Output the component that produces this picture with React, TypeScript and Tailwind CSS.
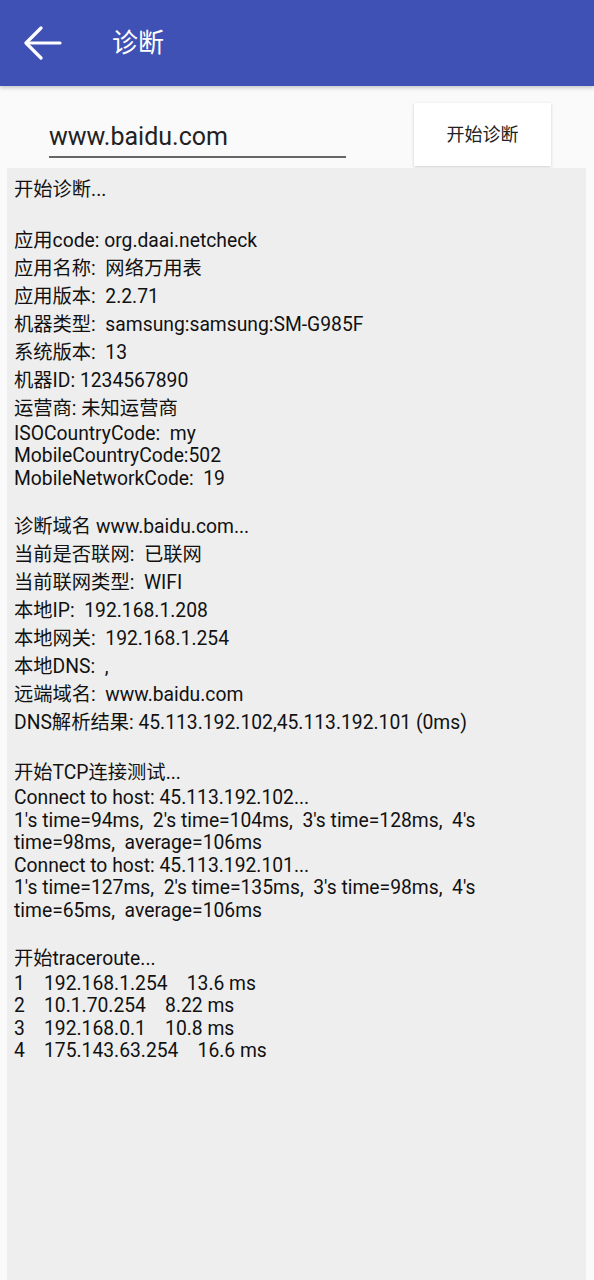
const LINES: string[] = [
  '开始诊断...',
  '',
  '应用code: org.daai.netcheck',
  '应用名称:  网络万用表',
  '应用版本:  2.2.71',
  '机器类型:  samsung:samsung:SM-G985F',
  '系统版本:  13',
  '机器ID: 1234567890',
  '运营商: 未知运营商',
  'ISOCountryCode:  my',
  'MobileCountryCode:502',
  'MobileNetworkCode:  19',
  '',
  '诊断域名 www.baidu.com...',
  '当前是否联网:  已联网',
  '当前联网类型:  WIFI',
  '本地IP:  192.168.1.208',
  '本地网关:  192.168.1.254',
  '本地DNS:  ,',
  '远端域名:  www.baidu.com',
  'DNS解析结果: 45.113.192.102,45.113.192.101 (0ms)',
  '',
  '开始TCP连接测试...',
  'Connect to host: 45.113.192.102...',
  "1's time=94ms,  2's time=104ms,  3's time=128ms,  4's",
  'time=98ms,  average=106ms',
  'Connect to host: 45.113.192.101...',
  "1's time=127ms,  2's time=135ms,  3's time=98ms,  4's",
  'time=65ms,  average=106ms',
  '',
  '开始traceroute...',
  '1    192.168.1.254    13.6 ms',
  '2    10.1.70.254    8.22 ms',
  '3    192.168.0.1    10.8 ms',
  '4    175.143.63.254    16.6 ms',
];

const hasCjk = (s: string) => /[\u3400-\u9fff\uff00-\uffef]/.test(s);

function BackArrow() {
  return (
    <svg width="38" height="34" viewBox="0 0 38 34" fill="none" stroke="white" strokeWidth="3.2" strokeLinecap="round" strokeLinejoin="round">
      <path d="M36 17H3" />
      <path d="M17 2L2 17l15 15" />
    </svg>
  );
}

export default function App() {
  return (
    <div
      className="flex min-h-screen flex-col bg-[#fafafa]"
      style={{ fontFamily: 'Roboto, "Noto Sans CJK SC", sans-serif' }}
    >
      <header className="flex h-[86px] items-center bg-[#3f51b5] shadow-[0_2px_4px_rgba(0,0,0,0.2)]">
        <div className="ml-[24px] flex items-center">
          <BackArrow />
        </div>
        <h1 className="ml-[50px] text-[26px] text-white">诊断</h1>
      </header>

      <div className="flex h-[82px] items-start">
        <div className="ml-[49px] mt-[31px] w-[297px] border-b-[2px] border-[#666]">
          <div className="pb-[1px] pt-[2px] text-[25px] leading-[36px] text-[#222]">www.baidu.com</div>
        </div>
        <button className="ml-[68px] mt-[17px] h-[63px] w-[137px] bg-white text-[18px] text-[#222] shadow-[0_1px_3px_rgba(0,0,0,0.18)]">
          开始诊断
        </button>
      </div>

      <div className="mx-[7px] mr-[8px] flex-1 bg-[#eeeeee] px-[7px] pt-[8px] text-[19.3px] text-[#111]">
        {LINES.map((line, i) => (
          <div
            key={i}
            className={
              hasCjk(line)
                ? 'h-[28px] whitespace-pre leading-[28px]'
                : 'h-[22.5px] whitespace-pre leading-[22.5px]'
            }
          >
            {line}
          </div>
        ))}
      </div>
    </div>
  );
}
